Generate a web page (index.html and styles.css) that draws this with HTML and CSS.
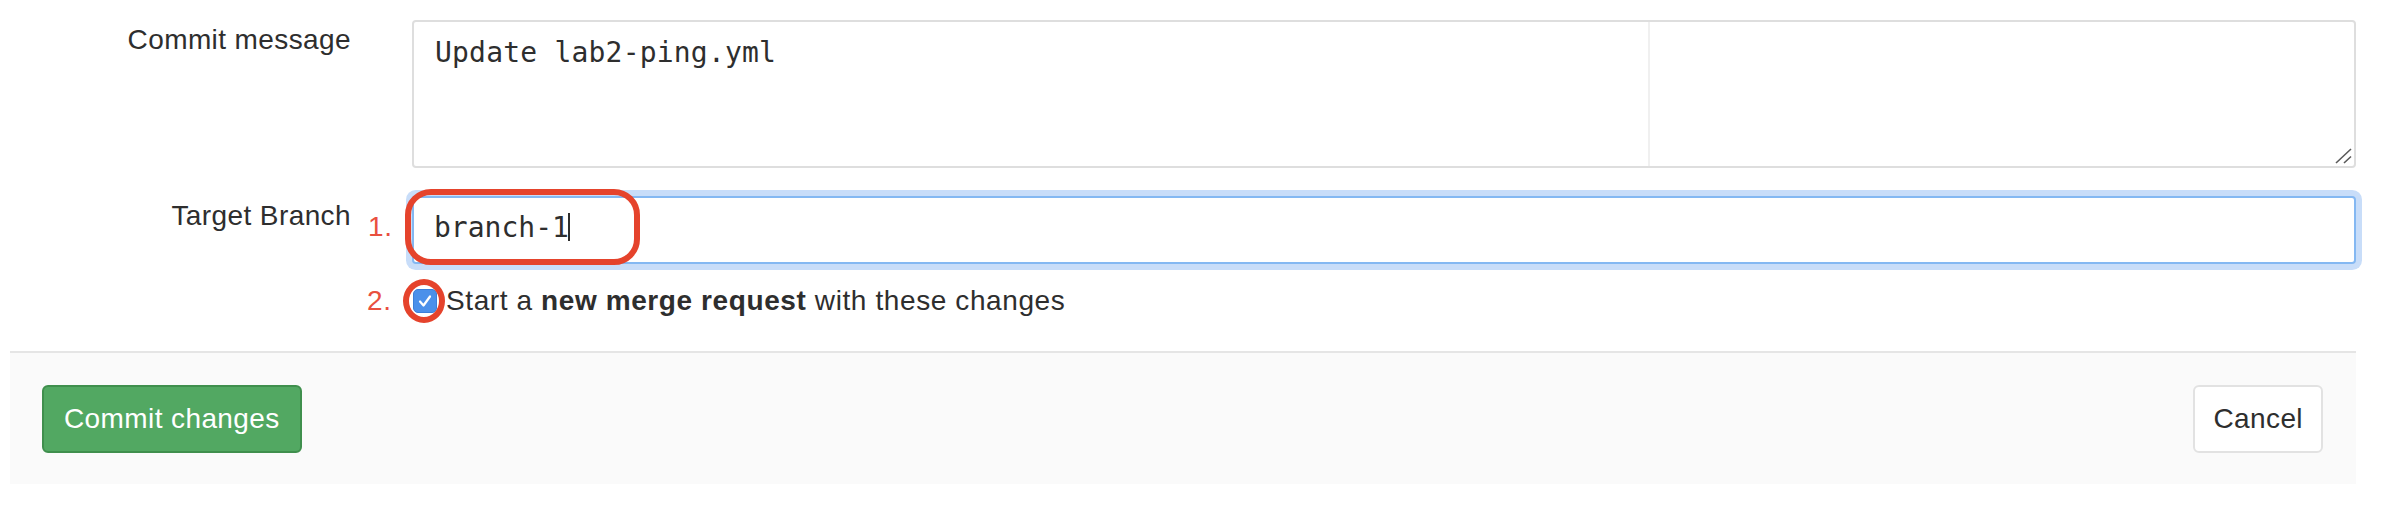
FILE: index.html
```html
<!DOCTYPE html>
<html lang="en">
<head>
<meta charset="utf-8">
<title>Commit changes</title>
<link rel="stylesheet" href="styles.css">
</head>
<body>
<div class="page">
  <form class="commit-form">
    <div class="form-row">
      <label class="form-label">Commit message</label>
      <div class="field">
        <div class="textarea">Update lab2-ping.yml<span class="ruler"></span><svg class="resize" width="18" height="18" viewBox="0 0 18 18"><path d="M1 16 L16 2 M9 16 L16 9.5" stroke="#5a5a5a" stroke-width="1.6" fill="none"/></svg></div>
      </div>
    </div>
    <div class="form-row row-branch">
      <label class="form-label">Target Branch</label>
      <div class="field">
        <span class="annot annot-1">1.</span>
        <div class="input">branch-1<span class="caret"></span></div>
        <span class="mark-rect"></span>
      </div>
    </div>
    <div class="form-row row-check">
      <div class="form-label"></div>
      <div class="field check-field">
        <span class="annot annot-2">2.</span>
        <span class="checkbox"><svg width="24" height="24" viewBox="0 0 24 24"><path d="M7 12.5 L10.5 16.5 L17 7.5" stroke="#fff" stroke-width="2.2" fill="none" stroke-linecap="round" stroke-linejoin="round"/></svg></span>
        <span class="mark-circle"></span>
        <span class="check-label">Start a <strong>new merge request</strong> with these changes</span>
      </div>
    </div>
  </form>
  <div class="form-actions">
    <button class="btn btn-create" type="button">Commit changes</button>
    <button class="btn btn-cancel" type="button">Cancel</button>
  </div>
</div>
</body>
</html>
```

FILE: styles.css
```css
html, body {
  margin: 0;
  padding: 0;
  background: #ffffff;
}

body {
  font-family: "Liberation Sans", Arial, sans-serif;
  font-size: 28px;
  color: #2e2e2e;
}

.page {
  margin-left: 10px;
  width: 2346px;
  padding-top: 20px;
}

.form-row {
  display: grid;
  grid-template-columns: 402px 1fr;
}

.form-label {
  text-align: right;
  padding-right: 61px;
  line-height: 40px;
  letter-spacing: 0.4px;
}

.field {
  position: relative;
}

.textarea {
  position: relative;
  box-sizing: border-box;
  height: 148px;
  border: 2px solid #dedede;
  border-radius: 4px;
  padding: 11px 21px;
  font-family: "DejaVu Sans Mono", "Liberation Mono", monospace;
  font-size: 28px;
  line-height: 40px;
  letter-spacing: 0.2px;
  color: #2e2e2e;
  background: #fff;
}

.ruler {
  position: absolute;
  top: 0;
  bottom: 0;
  left: 1234px;
  width: 2px;
  background: #f0f0f0;
}

.resize {
  position: absolute;
  right: 1px;
  bottom: 1px;
}

.row-branch {
  margin-top: 28px;
}

.input {
  box-sizing: border-box;
  height: 68px;
  border: 2px solid #84b8f2;
  border-radius: 4px;
  box-shadow: 0 0 0 6px #c8ddf9;
  padding: 10px 20px 14px;
  font-family: "DejaVu Sans Mono", "Liberation Mono", monospace;
  font-size: 28px;
  line-height: 40px;
  color: #2e2e2e;
  background: #fff;
}

.caret {
  display: inline-block;
  width: 2px;
  height: 28px;
  margin-left: -1px;
  background: #2e2e2e;
  vertical-align: -4px;
}

.annot {
  position: absolute;
  line-height: 40px;
  color: #e9503f;
  letter-spacing: 0.6px;
}

.annot-1 {
  left: -44px;
  top: 11px;
}

.annot-2 {
  left: -45px;
  top: 0;
}

.mark-rect {
  position: absolute;
  left: -7px;
  top: -7px;
  width: 235px;
  height: 76px;
  box-sizing: border-box;
  border: 6px solid #e5432c;
  border-radius: 26px;
}

.row-check {
  margin-top: 17px;
}

.check-field {
  display: flex;
  align-items: center;
  height: 40px;
}

.checkbox {
  box-sizing: border-box;
  width: 24px;
  height: 24px;
  margin-left: 1px;
  border-radius: 5px;
  background: #4b90ea;
  border: 1px solid #3b7fd9;
  display: flex;
  align-items: center;
  justify-content: center;
}

.checkbox svg {
  display: block;
  margin: -1px;
}

.mark-circle {
  position: absolute;
  left: -9px;
  top: -2px;
  width: 42px;
  height: 44px;
  box-sizing: border-box;
  border: 6px solid #e5432c;
  border-radius: 50%;
}

.check-label {
  margin-left: 9px;
  line-height: 40px;
  letter-spacing: 0.6px;
}

.check-label strong {
  font-weight: 700;
}

.form-actions {
  margin-top: 30px;
  display: flex;
  justify-content: space-between;
  align-items: center;
  padding: 32px 33px 31px 32px;
  border-top: 2px solid #e5e5e5;
  background: #fafafa;
}

.btn {
  box-sizing: border-box;
  height: 68px;
  padding: 12px 20px;
  border-radius: 6px;
  font-family: "Liberation Sans", Arial, sans-serif;
  font-size: 28px;
  line-height: 40px;
  letter-spacing: 0.4px;
  cursor: pointer;
}

.btn-create {
  background: #52a862;
  border: 2px solid #3f8f4d;
  color: #ffffff;
}

.btn-cancel {
  background: #ffffff;
  border: 2px solid #e2e2e2;
  color: #2e2e2e;
  padding: 12px 18px;
}
```
